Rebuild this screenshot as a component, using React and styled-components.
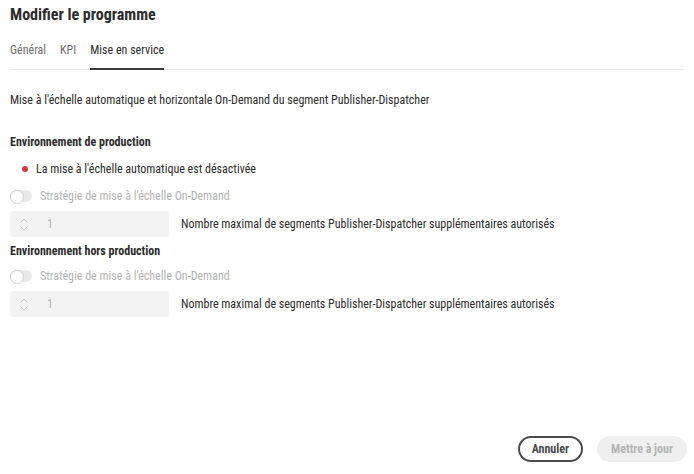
import styled, { createGlobalStyle } from 'styled-components';

const GlobalStyle = createGlobalStyle`
  html, body {
    margin: 0;
    padding: 0;
    background: #ffffff;
  }
  body {
    font-family: "Roboto Condensed", "Liberation Sans", Arial, sans-serif;
    color: #2c2c2c;
    -webkit-font-smoothing: antialiased;
  }
  * {
    box-sizing: border-box;
  }
`;

const Dialog = styled.div`
  display: flex;
  flex-direction: column;
  height: 474px;
  width: 694px;
  padding: 0 7px 12px 10px;
`;

const Title = styled.h1`
  margin: 0;
  padding-top: 5px;
  font-size: 16px;
  font-weight: 700;
  line-height: 20px;
  color: #2c2c2c;
`;

const TabList = styled.div`
  display: flex;
  gap: 14px;
  margin-top: 14px;
  margin-right: 3px;
  border-bottom: 1px solid #eaeaea;
`;

const Tab = styled.div`
  position: relative;
  font-size: 12px;
  line-height: 16px;
  padding: 3px 0 11px;
  color: ${(p) => (p.$active ? '#2c2c2c' : '#6e6e6e')};

  &::after {
    content: '';
    display: ${(p) => (p.$active ? 'block' : 'none')};
    position: absolute;
    left: 0;
    right: 0;
    bottom: -1px;
    height: 2px;
    background: #3a3a3a;
  }
`;

const Description = styled.p`
  margin: 22px 0 0;
  font-size: 12px;
  line-height: 16px;
`;

const SectionHeading = styled.h2`
  margin: ${(p) => p.$top}px 0 0;
  font-size: 12px;
  font-weight: 700;
  line-height: 16px;
`;

const StatusRow = styled.div`
  display: flex;
  align-items: center;
  gap: 8px;
  margin-top: 11px;
  padding-left: 12px;
  font-size: 12px;
  line-height: 16px;
`;

const StatusDot = styled.span`
  width: 6px;
  height: 6px;
  border-radius: 50%;
  background: #d7373f;
`;

const ToggleRow = styled.label`
  display: flex;
  align-items: center;
  gap: 8px;
  margin-top: ${(p) => p.$top}px;
  font-size: 12px;
  line-height: 16px;
  color: #b3b3b3;
`;

const Track = styled.span`
  position: relative;
  width: 22px;
  height: 12px;
  border-radius: 6px;
  background: #e8e8e8;

  &::before {
    content: '';
    position: absolute;
    left: 0;
    top: 0;
    width: 12px;
    height: 12px;
    border-radius: 50%;
    background: #ffffff;
    border: 1.5px solid #d0d0d0;
  }
`;

const FieldRow = styled.div`
  display: flex;
  align-items: center;
  gap: 12px;
  margin-top: 7px;
`;

const Stepper = styled.div`
  display: flex;
  align-items: center;
  width: 159px;
  height: 26px;
  border-radius: 4px;
  background: #f3f3f3;
`;

const Arrows = styled.div`
  display: flex;
  flex-direction: column;
  justify-content: center;
  gap: 3px;
  width: 30px;
  padding-left: 10px;
`;

const StepValue = styled.span`
  padding-left: 7px;
  font-size: 12px;
  color: #b3b3b3;
`;

const FieldLabel = styled.span`
  font-size: 12px;
  line-height: 16px;
`;

const Footer = styled.div`
  display: flex;
  justify-content: flex-end;
  gap: 14px;
  margin-top: auto;
`;

const Button = styled.button`
  height: 26px;
  min-width: ${(p) => (p.$primary ? 90 : 63)}px;
  padding: 0 12px;
  border-radius: 13px;
  font-family: inherit;
  font-size: 12px;
  font-weight: 700;
  border: ${(p) => (p.$primary ? '2px solid transparent' : '2px solid #4b4b4b')};
  background: ${(p) => (p.$primary ? '#efefef' : '#ffffff')};
  color: ${(p) => (p.$primary ? '#b3b3b3' : '#4b4b4b')};
`;

const Chevron = ({ up }) => (
  <svg width="8" height="5" viewBox="0 0 8 5">
    <path
      d={up ? 'M1 4 L4 1 L7 4' : 'M1 1 L4 4 L7 1'}
      fill="none"
      stroke="#c6c6c6"
      strokeWidth="1"
      strokeLinecap="round"
      strokeLinejoin="round"
    />
  </svg>
);

const NumberField = () => (
  <FieldRow>
    <Stepper>
      <Arrows>
        <Chevron up />
        <Chevron />
      </Arrows>
      <StepValue>1</StepValue>
    </Stepper>
    <FieldLabel>Nombre maximal de segments Publisher-Dispatcher supplémentaires autorisés</FieldLabel>
  </FieldRow>
);

const App = () => {
  return (
    <>
      <GlobalStyle />
      <Dialog>
        <Title>Modifier le programme</Title>
        <TabList>
          <Tab>Général</Tab>
          <Tab>KPI</Tab>
          <Tab $active>Mise en service</Tab>
        </TabList>
        <Description>
          Mise à l'échelle automatique et horizontale On-Demand du segment Publisher-Dispatcher
        </Description>

        <SectionHeading $top={26}>Environnement de production</SectionHeading>
        <StatusRow>
          <StatusDot />
          La mise à l'échelle automatique est désactivée
        </StatusRow>
        <ToggleRow $top={11}>
          <Track />
          Stratégie de mise à l'échelle On-Demand
        </ToggleRow>
        <NumberField />

        <SectionHeading $top={6}>Environnement hors production</SectionHeading>
        <ToggleRow $top={9}>
          <Track />
          Stratégie de mise à l'échelle On-Demand
        </ToggleRow>
        <NumberField />

        <Footer>
          <Button>Annuler</Button>
          <Button $primary>Mettre à jour</Button>
        </Footer>
      </Dialog>
    </>
  );
};

export default App;
